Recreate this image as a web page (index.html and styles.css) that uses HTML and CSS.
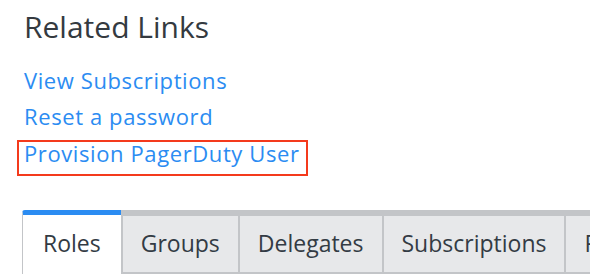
FILE: index.html
```html
<!DOCTYPE html>
<html lang="en">
<head>
    <meta charset="UTF-8">
    <title>Related Links</title>
    <link rel="stylesheet" href="styles.css">
</head>
<body>
    <div class="page">
        <h2 class="heading">Related Links</h2>
        <ul class="links">
            <li><a href="#">View Subscriptions</a></li>
            <li><a href="#">Reset a password</a></li>
            <li class="highlight"><a href="#">Provision PagerDuty User</a></li>
        </ul>
        <div class="tabs">
            <div class="tab active">Roles</div>
            <div class="tab">Groups</div>
            <div class="tab">Delegates</div>
            <div class="tab">Subscriptions</div>
            <div class="tab">Permissions</div>
        </div>
    </div>
</body>
</html>
```

FILE: styles.css
```css
body {
    margin: 0;
    padding: 0;
    background-color: white;
    font-family: 'Open Sans', 'Noto Sans', sans-serif;
    overflow: hidden;
}
.page {
    padding: 7px 0 0 24px;
    width: 760px;
}
.heading {
    margin: 0;
    font-size: 30px;
    font-weight: normal;
    line-height: 40px;
    color: #343a40;
}
.links {
    list-style: none;
    margin: 0;
    padding: 15px 0 0 0;
}
.links li {
    height: 36px;
    line-height: 36px;
    font-size: 22px;
    letter-spacing: 0.6px;
}
.links a {
    color: #2b8cf2;
    text-decoration: none;
}
.links .highlight {
    display: inline-block;
    height: auto;
    line-height: 22px;
    margin: 6px 0 0 -7px;
    padding: 0 6px 10px 5px;
    border: 2px solid #f43a1c;
}
.tabs {
    display: flex;
    margin-top: 34px;
    margin-left: -2px;
}
.tab {
    padding: 0 18px;
    height: 64px;
    line-height: 55px;
    font-size: 23px;
    color: #333b44;
    background-color: #e7e8ea;
    border-top: 6px solid #c3c5c8;
    border-left: 2px solid #c3c5c8;
    border-bottom: 2px solid #c3c5c8;
    box-sizing: border-box;
    white-space: nowrap;
}
.tab.active {
    padding: 0 20px;
    background-color: white;
    line-height: 56px;
    border-top: 5px solid #2b8cf2;
    border-left: 1px solid #c3c5c8;
    border-bottom: none;
    border-top-left-radius: 3px;
}
```
